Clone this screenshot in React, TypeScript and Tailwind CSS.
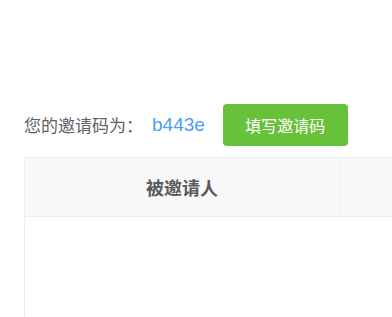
import React from 'react';

const font = { fontFamily: '"Noto Sans CJK SC", "Liberation Sans", sans-serif' };

export default function App() {
  return (
    <div className="h-screen w-full overflow-hidden bg-white" style={font}>
      <div className="pl-[24px] pt-[104px]">
        {/* invite code row */}
        <div className="flex items-center h-[42px]">
          <span className="text-[17px] text-[#606266]">您的邀请码为：</span>
          <span
            className="ml-[9px] text-[19px] text-[#4a9ff0]"
            style={{ fontFamily: '"Liberation Sans", sans-serif' }}
          >
            b443e
          </span>
          <button className="ml-[18px] h-[42px] w-[125px] rounded-[4px] bg-[#67c23a] text-[16px] text-white">
            填写邀请码
          </button>
        </div>

        {/* invitee table */}
        <div className="mt-[11px] w-[700px] border-l border-t border-[#ebeef5]">
          <div className="flex h-[59px] bg-[#f8f8f8] border-b border-[#ebeef5]">
            <div className="w-[315px] flex items-center justify-center border-r border-[#ebeef5] text-[18px] font-bold text-[#5a5a5a]">
              被邀请人
            </div>
            <div className="flex-1" />
          </div>
          <div className="h-[120px] bg-white" />
        </div>
      </div>
    </div>
  );
}
